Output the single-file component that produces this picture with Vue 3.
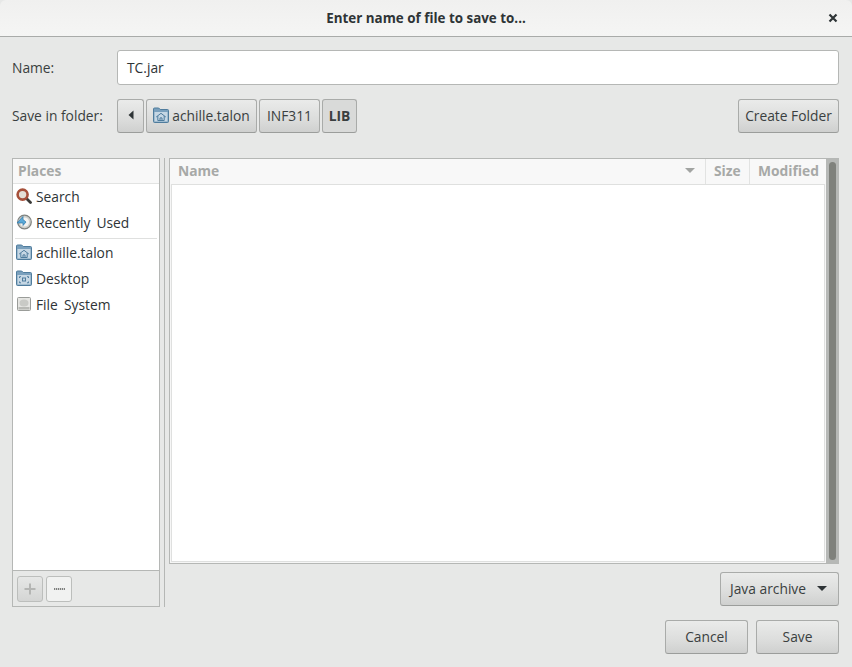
<script setup>
const shortcuts = [
  { label: 'Search', icon: 'search' },
  { label: 'Recently Used', icon: 'recent' },
]
const folders = [
  { label: 'achille.talon', icon: 'home' },
  { label: 'Desktop', icon: 'desktop' },
  { label: 'File System', icon: 'disk' },
]
</script>

<template>
  <div class="dialog">
    <header class="titlebar">
      <span class="title">Enter name of file to save to...</span>
      <svg class="close" width="10" height="10" viewBox="0 0 10 10"><path d="M1.5 1.5l7 7M8.5 1.5l-7 7" stroke="#2e3436" stroke-width="2.2" fill="none"/></svg>
    </header>

    <main class="content">
      <div class="row name-row">
        <label class="label">Name:</label>
        <div class="entry">TC.jar</div>
      </div>

      <div class="row folder-row">
        <label class="label folder-label">Save in folder:</label>
        <div class="path">
          <button class="btn back">
            <svg width="6" height="10" viewBox="0 0 6 10"><path d="M5.5 0.5v9L0.5 5z" fill="#2e3436"/></svg>
          </button>
          <button class="btn crumb first">
            <svg class="icon" viewBox="0 0 16 16">
              <use href="#folder-home" />
            </svg>
            <span>achille.talon</span>
          </button>
          <button class="btn crumb inf">INF311</button>
          <button class="btn crumb active">LIB</button>
        </div>
        <button class="btn create">Create Folder</button>
      </div>

      <svg width="0" height="0" class="defs">
        <defs>
          <g id="folder-base">
            <path d="M0.5 2a1 1 0 0 1 1-1h4.2l1.5 1.5h7.3a1 1 0 0 1 1 1V14.5a1 1 0 0 1-1 1h-13a1 1 0 0 1-1-1z" fill="#7aa0bd" stroke="#4f7c9d" stroke-width="1"/>
            <rect x="1.5" y="5" width="13" height="9.5" fill="#c6d7e4"/>
          </g>
          <g id="folder-home">
            <use href="#folder-base" />
            <path d="M3.2 10L8 6.3 12.8 10M4.8 9v4.5h6.4V9M7 13.5v-2.6h2v2.6" fill="none" stroke="#4f7c9d" stroke-width="1"/>
          </g>
          <g id="folder-desktop">
            <use href="#folder-base" />
            <path d="M3.5 8V6.7H5M11 6.7h1.5V8M12.5 11.5v1.3H11M5 12.8H3.5v-1.3" fill="none" stroke="#4f7c9d" stroke-width="1"/>
            <rect x="6.5" y="8" width="3" height="3" fill="none" stroke="#4f7c9d" stroke-width="1"/>
          </g>
        </defs>
      </svg>

      <div class="browser">
        <aside class="places">
          <div class="places-head">Places</div>
          <div class="places-list">
            <div v-for="s in shortcuts" :key="s.label" class="place">
              <svg v-if="s.icon === 'search'" class="icon" viewBox="0 0 16 16">
                <path d="M10.5 10.5l4 4" stroke="#3a3a38" stroke-width="2.8" stroke-linecap="round"/>
                <circle cx="6.6" cy="6.6" r="5" fill="#e4dfd6" stroke="#a6503a" stroke-width="2.6"/>
              </svg>
              <svg v-else class="icon" viewBox="0 0 16 16">
                <circle cx="8.5" cy="8" r="6.8" fill="#cfd0cc" stroke="#7f827f" stroke-width="1.2"/>
                <circle cx="8.5" cy="8" r="4.6" fill="#f3f3f1"/>
                <path d="M1 9l6-6.5v3l3 2.5-3 3.5v-2.5z" fill="#5aa9d8" stroke="#2f77a8" stroke-width="0.7"/>
              </svg>
              <span>{{ s.label }}</span>
            </div>
            <div class="sep"></div>
            <div v-for="f in folders" :key="f.label" class="place">
              <svg v-if="f.icon === 'home'" class="icon" viewBox="0 0 16 16"><use href="#folder-home" /></svg>
              <svg v-else-if="f.icon === 'desktop'" class="icon" viewBox="0 0 16 16"><use href="#folder-desktop" /></svg>
              <svg v-else class="icon" viewBox="0 0 16 16">
                <rect x="1.5" y="1.5" width="13" height="13" rx="1" fill="#e6e6e3" stroke="#9a9c99"/>
                <ellipse cx="8" cy="7" rx="4.5" ry="3.6" fill="#c9cac6"/>
                <rect x="2.5" y="11" width="11" height="2.5" fill="#b8b9b5"/>
              </svg>
              <span>{{ f.label }}</span>
            </div>
          </div>
          <div class="places-tools">
            <button class="tool plus">
              <svg width="12" height="12" viewBox="0 0 12 12"><path d="M6 0.5v11M0.5 6h11" stroke="#b4b5b3" stroke-width="2" fill="none"/></svg>
            </button>
            <button class="tool minus"><span class="dash"></span></button>
          </div>
        </aside>

        <div class="handle"></div>

        <section class="files">
          <div class="tree-wrap">
            <div class="tree">
              <div class="columns">
                <div class="col col-name">
                  <span>Name</span>
                  <svg width="10" height="5" viewBox="0 0 10 5"><path d="M0 0h10L5 5z" fill="#a2a4a2"/></svg>
                </div>
                <div class="col col-size">Size</div>
                <div class="col col-mod">Modified</div>
              </div>
              <div class="tree-body"></div>
            </div>
            <div class="scrollbar"><div class="slider"></div></div>
          </div>

          <div class="filter-row">
            <button class="btn filter">
              <span>Java archive</span>
              <svg width="10" height="5" viewBox="0 0 10 5"><path d="M0 0h10L5 5z" fill="#2e3436"/></svg>
            </button>
          </div>
        </section>
      </div>

      <div class="actions">
        <button class="btn action">Cancel</button>
        <button class="btn action">Save</button>
      </div>
    </main>
  </div>
</template>

<style>
html, body { margin: 0; background: #e7e8e7; }
</style>

<style scoped>
.dialog {
  width: 852px;
  height: 667px;
  display: flex;
  flex-direction: column;
  background: #e7e8e7;
  color: #2e3436;
  font-family: "Open Sans", "Noto Sans", sans-serif;
  font-size: 13.8px;
  overflow: hidden;
}
.titlebar {
  height: 36px;
  flex: none;
  box-sizing: content-box;
  position: relative;
  display: flex;
  align-items: center;
  justify-content: center;
  background: linear-gradient(#f0f0ef, #f5f5f4);
  border-bottom: 1px solid #a9aba9;
  border-radius: 6px 6px 0 0;
}
.title { font-weight: 700; font-size: 13.4px; color: #2e3436; }
.close { position: absolute; right: 14px; top: 13px; }
.content {
  flex: 1;
  min-height: 0;
  display: flex;
  flex-direction: column;
  padding: 13px 13px 13px 12px;
}
.row { display: flex; align-items: center; }
.name-row { height: 35px; }
.folder-row { height: 34px; margin-top: 14px; }
.label { width: 105px; flex: none; color: #3a3f40; }
.folder-label { padding-bottom: 2px; }
.entry {
  flex: 1;
  height: 35px;
  box-sizing: border-box;
  display: flex;
  align-items: center;
  padding: 0 9px;
  background: #fff;
  border: 1px solid #b5b7b5;
  border-radius: 3px;
}
.path { display: flex; gap: 2px; flex: 1; }
.btn {
  height: 34px;
  box-sizing: border-box;
  padding: 0 6px 2px;
  display: inline-flex;
  align-items: center;
  justify-content: center;
  font: inherit;
  color: #3a3f40;
  background: linear-gradient(#eaebea, #dcdddc 60%, #cfd0cf);
  border: 1px solid #a9aba9;
  border-bottom-color: #9b9d9b;
  border-radius: 3px;
}
.back { width: 27px; padding: 0 0 2px; }
.crumb { gap: 3px; }
.first { width: 111px; padding: 0 0 2px; }
.inf { width: 61px; padding: 0 0 2px; }
.active { width: 35px; padding: 0 0 2px; background: #d9dad9; font-weight: 700; }
.create { width: 101px; padding: 0 0 2px; }
.icon { width: 16px; height: 16px; flex: none; }
.defs { position: absolute; }
.browser {
  flex: 1;
  min-height: 0;
  display: flex;
  margin-top: 25px;
}
.places {
  width: 148px;
  flex: none;
  box-sizing: border-box;
  display: flex;
  flex-direction: column;
  background: #fff;
  border: 1px solid #b5b7b5;
}
.places-head {
  height: 25px;
  box-sizing: border-box;
  padding: 0 0 2px 5px;
  display: flex;
  align-items: center;
  font-weight: 700;
  color: #a7a9a7;
  background: #f8f8f8;
  border-bottom: 1px solid #e2e3e2;
}
.places-list { flex: 1; }
.place {
  height: 26px;
  box-sizing: border-box;
  display: flex;
  align-items: center;
  gap: 4px;
  padding: 0 0 2px 3px;
  color: #2e3436;
  word-spacing: 2.5px;
}
.sep { height: 1px; background: #dfe0df; margin: 2px 2px 1px 2px; }
.places-tools {
  height: 36px;
  flex: none;
  box-sizing: border-box;
  display: flex;
  gap: 3px;
  padding: 5px 4px;
  background: #e7e8e7;
  border-top: 1px solid #b5b7b5;
}
.tool {
  width: 26px;
  height: 26px;
  padding: 0;
  display: inline-flex;
  align-items: center;
  justify-content: center;
  border: 1px solid #bcbebc;
  border-radius: 3px;
}
.plus { background: linear-gradient(#e6e7e6, #d4d5d4); }
.minus { background: #f1f2f1; }
.dash { width: 11px; height: 2px; background: repeating-linear-gradient(90deg, #7e807e 0 1px, #d0d1d0 1px 2px); }
.handle { width: 1px; flex: none; background: #b5b7b5; margin: 0 4px; }
.files { flex: 1; min-width: 0; display: flex; flex-direction: column; }
.tree-wrap {
  height: 406px;
  flex: none;
  display: flex;
  border: 1px solid #b5b7b5;
  border-right: 0;
  box-sizing: border-box;
}
.tree { flex: 1; min-width: 0; display: flex; flex-direction: column; background: #f6f6f6; }
.columns { height: 25px; flex: none; display: flex; background: #f8f8f8; }
.col {
  box-sizing: border-box;
  display: flex;
  align-items: center;
  padding: 0 8px 2px;
  font-weight: 700;
  color: #a7a9a7;
  border-right: 1px solid #e2e3e2;
}
.col-name { flex: 1; justify-content: space-between; padding-right: 10px; }
.col-size { width: 44px; }
.col-mod { width: 76px; border-right: 0; padding-right: 0; }
.tree-body {
  flex: 1;
  margin: 0 1px 1px 1px;
  background: #fff;
  border: 1px solid #dfe0df;
}
.scrollbar {
  width: 13px;
  flex: none;
  box-sizing: border-box;
  padding: 3px;
  background: #b6b8b6;
}
.slider { width: 7px; height: 100%; background: #7f817c; border-radius: 4px; }
.filter-row { display: flex; justify-content: flex-end; margin-top: 8px; }
.filter { width: 119px; height: 34px; padding: 0 11px 2px 9px; justify-content: space-between; }
.actions { display: flex; justify-content: flex-end; gap: 8px; margin-top: 13px; }
.action { width: 83px; }
</style>
